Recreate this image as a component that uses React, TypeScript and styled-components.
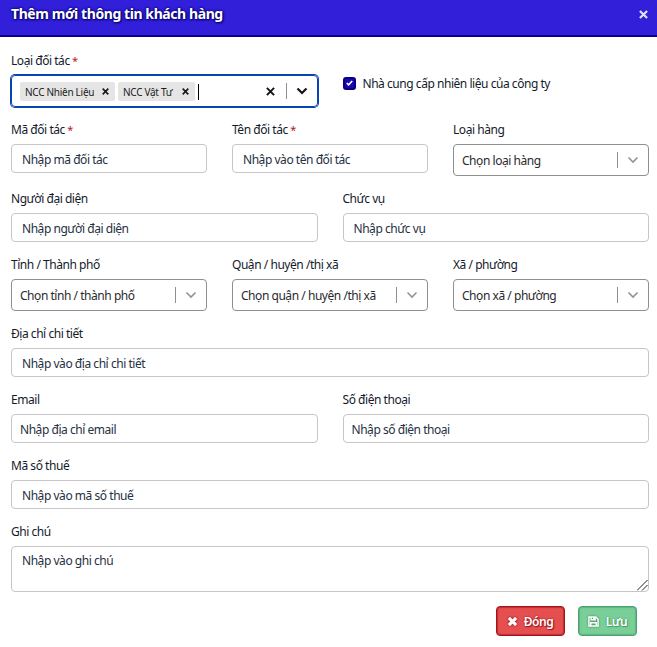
import React from "react";
import styled, { createGlobalStyle, css } from "styled-components";

const GlobalStyle = createGlobalStyle`
  *, *::before, *::after { box-sizing: border-box; }
  body {
    margin: 0;
    background: #fff;
    color: #141a2c;
    font-family: "Noto Sans", "Open Sans", sans-serif;
    font-size: 12px;
    letter-spacing: -0.46px;
    overflow: hidden;
  }
  input, textarea, button { font: inherit; letter-spacing: inherit; }
`;

const Dialog = styled.div`
  width: 657px;
  height: 647px;
  background: #fff;
`;

const Header = styled.header`
  display: flex;
  justify-content: space-between;
  height: 37px;
  padding: 4px 9px 0 11px;
  background: #311fda;
  border-bottom: 2px solid #08008c;
  color: #fff;
`;

const Title = styled.h1`
  margin: 0;
  font-size: 14px;
  line-height: 20px;
  font-weight: 700;
  letter-spacing: -0.42px;
  white-space: nowrap;
  text-shadow: 0 0 2px #08006e, 1px 1px 2px #08006e, 0 0 3px #08006e;
`;

const PlainButton = styled.button`
  display: flex;
  align-items: center;
  padding: 0;
  border: 0;
  background: none;
  color: inherit;
`;

const CloseButton = styled(PlainButton)`
  height: 20px;
  color: #e3e1ff;
`;

const Form = styled.form`
  display: flex;
  flex-direction: column;
  gap: 13px;
  padding: 14px 8px 0 11px;
`;

const Row = styled.div<{ $cols: number }>`
  display: grid;
  grid-template-columns: repeat(${(p) => p.$cols}, minmax(0, 1fr));
  column-gap: 25px;
  align-items: start;
`;

const FieldBox = styled.div`
  display: flex;
  flex-direction: column;
  gap: 5px;
`;

const Label = styled.label`
  height: 19px;
  padding-top: 1px;
  line-height: 18px;
  white-space: nowrap;
`;

const Required = styled.span`
  color: #b5141b;
  font-size: 11px;
`;

const frame = css`
  width: 100%;
  border: 1px solid #c6c6c8;
  border-radius: 4px;
  background: #fff;
  color: #1e2838;
  outline: none;
  &::placeholder { color: #263042; opacity: 1; }
`;

const Input = styled.input<{ $tight?: boolean }>`
  ${frame}
  height: 29px;
  padding: 2px 10px 0 ${(p) => (p.$tight ? 8 : 10)}px;
`;

const TextArea = styled.textarea`
  ${frame}
  display: block;
  height: 46px;
  padding: 5px 10px;
  line-height: 18px;
  resize: none;
`;

const NoteWrap = styled.div`
  position: relative;
`;

const Grip = styled.svg`
  position: absolute;
  right: 1px;
  bottom: 1px;
`;

const SelectBox = styled.div<{ $focused?: boolean }>`
  display: flex;
  align-items: center;
  height: 32px;
  padding-left: 8px;
  border: 1px solid ${(p) => (p.$focused ? "#0a43b4" : "#8f8f8f")};
  border-radius: 4px;
  box-shadow: ${(p) => (p.$focused ? "0 0 0 1px #0a43b4" : "none")};
  color: #2a2a2e;
`;

const SelectValue = styled.div`
  display: flex;
  flex: 1;
  align-items: center;
  gap: 3px;
  padding-top: 1px;
  white-space: nowrap;
`;

const Divider = styled.span`
  width: 1px;
  height: 16px;
  background: #8f8f8f;
`;

const Indicator = styled.span<{ $dark?: boolean }>`
  display: flex;
  justify-content: center;
  width: 30px;
  color: ${(p) => (p.$dark ? "#141414" : "#939393")};
`;

const Tag = styled.span<{ $width: number }>`
  display: flex;
  align-items: center;
  justify-content: space-between;
  width: ${(p) => p.$width}px;
  height: 19px;
  margin-top: -1px;
  padding: 1px 6px 0 5px;
  border-radius: 2px;
  background: #e5e5e5;
  color: #1c1c1c;
  font-size: 10px;
  letter-spacing: -0.28px;
`;

const Caret = styled.span`
  width: 1px;
  height: 16px;
  background: #000;
`;

const CheckLabel = styled.label`
  display: flex;
  align-items: center;
  gap: 7px;
  height: 18px;
  margin-top: 23px;
  white-space: nowrap;
`;

const CheckMark = styled.span`
  display: flex;
  align-items: center;
  justify-content: center;
  width: 13px;
  height: 13px;
  border: 2px solid #08007c;
  border-radius: 3px;
  background: #1608b4;
`;

const Actions = styled.div`
  display: flex;
  justify-content: flex-end;
  gap: 13px;
  margin-top: 1px;
  padding-right: 12px;
`;

const ActionButton = styled.button<{ $tone: "danger" | "success" }>`
  display: flex;
  align-items: center;
  justify-content: center;
  gap: 7px;
  width: ${(p) => (p.$tone === "danger" ? 69 : 59)}px;
  height: 30px;
  padding: 0;
  border: 1px solid ${(p) => (p.$tone === "danger" ? "#a3141a" : "#4ba36d")};
  border-radius: 4px;
  background: ${(p) => (p.$tone === "danger" ? "#e54f50" : "#7acf98")};
  box-shadow: inset 0 0 1px 1px ${(p) => (p.$tone === "danger" ? "#c22c30" : "#5db57f")};
  color: #fff;
  font-weight: 600;
  text-shadow: 0 0 2px ${(p) => (p.$tone === "danger" ? "#8c0c12" : "#348556")},
    1px 1px 1px ${(p) => (p.$tone === "danger" ? "#a3141a" : "#4ba36d")};
  svg { filter: drop-shadow(0 0 1px ${(p) => (p.$tone === "danger" ? "#8c0c12" : "#348556")}); }
`;

const Cross = ({ size, weight }: { size: number; weight: number }) => (
  <svg width={size} height={size} viewBox="0 0 10 10" fill="none" stroke="currentColor" strokeWidth={weight}>
    <path d="M1 1l8 8M9 1l-8 8" />
  </svg>
);

const Chevron = ({ weight = 1.6 }: { weight?: number }) => (
  <svg width="12" height="8" viewBox="0 0 12 8" fill="none" stroke="currentColor" strokeWidth={weight}>
    <path d="M1.5 1.5L6 6l4.5-4.5" />
  </svg>
);

const SaveIcon = () => (
  <svg width="11" height="11" viewBox="0 0 12 12" fill="none" stroke="currentColor" strokeWidth="1.6">
    <path d="M1 1h7.5L11 3.5V11H1z" />
    <path d="M3.4 1v3.2h4.4V1M6.3 1.2v2.2M3 11V7.4h6V11" />
  </svg>
);

type FieldProps = { label: string; required?: boolean; children: React.ReactNode };

const Field = ({ label, required, children }: FieldProps) => (
  <FieldBox>
    <Label>
      {label}
      {required && <Required> *</Required>}
    </Label>
    {children}
  </FieldBox>
);

const Select = ({ text }: { text: string }) => (
  <SelectBox>
    <SelectValue>{text}</SelectValue>
    <Divider />
    <Indicator><Chevron /></Indicator>
  </SelectBox>
);

export default function App() {
  return (
    <Dialog>
      <GlobalStyle />
      <Header>
        <Title>Thêm mới thông tin khách hàng</Title>
        <CloseButton aria-label="Đóng"><Cross size={9} weight={2.4} /></CloseButton>
      </Header>
      <Form>
        <Row $cols={2}>
          <Field label="Loại đối tác" required>
            <SelectBox $focused>
              <SelectValue>
                <Tag $width={95}>NCC Nhiên Liệu<Cross size={7} weight={2.4} /></Tag>
                <Tag $width={77}>NCC Vật Tư<Cross size={7} weight={2.4} /></Tag>
                <Caret />
              </SelectValue>
              <Indicator $dark><Cross size={9} weight={2.2} /></Indicator>
              <Divider />
              <Indicator $dark><Chevron weight={2.2} /></Indicator>
            </SelectBox>
          </Field>
          <CheckLabel>
            <CheckMark>
              <svg width="7" height="6" viewBox="0 0 7 6" fill="none" stroke="#fff" strokeWidth="1.7">
                <path d="M.8 3l1.8 1.8L6.2 1" />
              </svg>
            </CheckMark>
            Nhà cung cấp nhiên liệu của công ty
          </CheckLabel>
        </Row>
        <Row $cols={3}>
          <Field label="Mã đối tác" required><Input placeholder="Nhập mã đối tác" /></Field>
          <Field label="Tên đối tác" required><Input placeholder="Nhập vào tên đối tác" /></Field>
          <Field label="Loại hàng"><Select text="Chọn loại hàng" /></Field>
        </Row>
        <Row $cols={2}>
          <Field label="Người đại diện"><Input placeholder="Nhập người đại diện" /></Field>
          <Field label="Chức vụ"><Input placeholder="Nhập chức vụ" /></Field>
        </Row>
        <Row $cols={3}>
          <Field label="Tỉnh / Thành phố"><Select text="Chọn tỉnh / thành phố" /></Field>
          <Field label="Quận / huyện /thị xã"><Select text="Chọn quận / huyện /thị xã" /></Field>
          <Field label="Xã / phường"><Select text="Chọn xã / phường" /></Field>
        </Row>
        <Row $cols={1}>
          <Field label="Địa chỉ chi tiết"><Input placeholder="Nhập vào địa chỉ chi tiết" /></Field>
        </Row>
        <Row $cols={2}>
          <Field label="Email"><Input $tight placeholder="Nhập địa chỉ email" /></Field>
          <Field label="Số điện thoại"><Input $tight placeholder="Nhập số điện thoại" /></Field>
        </Row>
        <Row $cols={1}>
          <Field label="Mã số thuế"><Input placeholder="Nhập vào mã số thuế" /></Field>
        </Row>
        <Row $cols={1}>
          <Field label="Ghi chú">
            <NoteWrap>
              <TextArea placeholder="Nhập vào ghi chú" />
              <Grip width="11" height="11" viewBox="0 0 11 11" stroke="#222" strokeWidth="1">
                <path d="M0 10.5L10.5 0M5 10.5L10.5 5" />
              </Grip>
            </NoteWrap>
          </Field>
        </Row>
        <Actions>
          <ActionButton type="button" $tone="danger"><Cross size={9} weight={3.4} />Đóng</ActionButton>
          <ActionButton type="button" $tone="success"><SaveIcon />Lưu</ActionButton>
        </Actions>
      </Form>
    </Dialog>
  );
}
